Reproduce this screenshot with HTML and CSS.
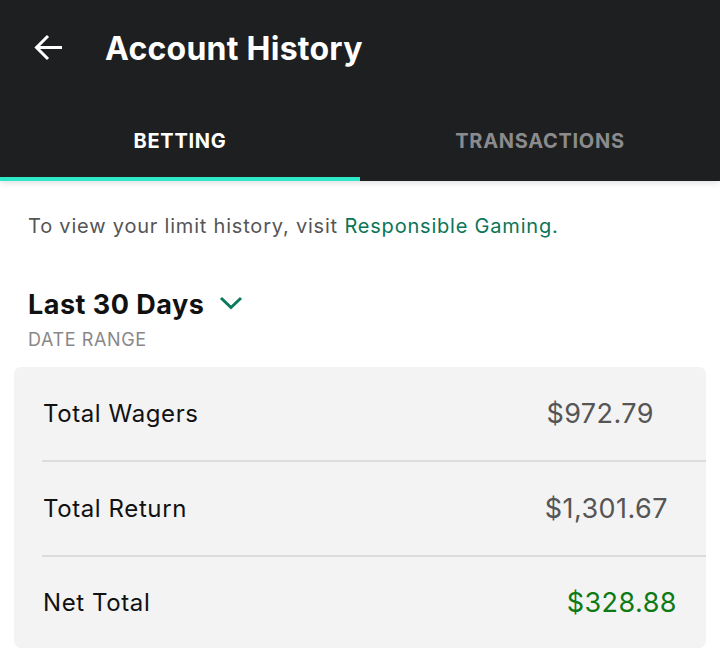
FILE: index.html
```html
<!DOCTYPE html>
<html>
<head>
<meta charset="utf-8">
<link rel="stylesheet" href="styles.css">
</head>
<body>
<header class="appbar">
  <div class="topbar">
    <svg class="back" width="30" height="30" viewBox="0 0 30 30">
      <path d="M28 14.5H3.5M14 3L2.5 14.5L14 26" fill="none" stroke="#fff" stroke-width="3"/>
    </svg>
    <h1 class="title">Account History</h1>
  </div>
  <nav class="tabs">
    <div class="tab active">BETTING</div>
    <div class="tab">TRANSACTIONS</div>
  </nav>
</header>
<main class="content">
  <p class="note">To view your limit history, visit <a class="link">Responsible Gaming.</a></p>
  <div class="range">
    <div class="range-title">Last 30 Days
      <svg class="chev" width="24" height="14" viewBox="0 0 24 14"><path d="M2 2L12 11.5L22 2" fill="none" stroke="#0b7a5c" stroke-width="3"/></svg>
    </div>
    <div class="range-label">DATE RANGE</div>
  </div>
  <section class="card">
    <div class="row"><span class="label">Total Wagers</span><span class="value v1">$972.79</span></div>
    <div class="row"><span class="label">Total Return</span><span class="value v2">$1,301.67</span></div>
    <div class="row"><span class="label">Net Total</span><span class="value positive">$328.88</span></div>
  </section>
</main>
</body>
</html>
```
FILE: styles.css
```css
html, body { margin: 0; padding: 0; background: #fff; }
body { font-family: Inter, "Noto Sans", sans-serif; width: 720px; height: 666px; overflow: hidden; }
.appbar { background: #1e1f21; height: 181px; display: flex; flex-direction: column; box-shadow: 0 2px 6px rgba(0,0,0,0.12); position: relative; }
.topbar { height: 97px; display: flex; align-items: center; padding-left: 34px; }
.back { display: block; margin-top: -2px; }
.title { margin: -1px 0 0 41px; color: #fff; font-size: 32px; font-weight: 700; letter-spacing: 0.25px; }
.tabs { flex: 1; display: flex; }
.tab { flex: 1; display: flex; align-items: center; justify-content: center; color: #8b8b8d; font-size: 20px; font-weight: 700; letter-spacing: 0.7px; padding-top: 8px; border-bottom: 4px solid transparent; }
.tab.active { color: #fff; border-bottom-color: #2ee8c8; }
.content { padding: 0 14px; }
.note { margin: 0; padding: 32px 14px 0; font-size: 20px; color: #555; line-height: 26px; letter-spacing: 0.8px; }
.link { color: #0a7557; }
.range { padding: 50px 14px 16px; }
.range-title { font-size: 27px; font-weight: 700; color: #111; display: flex; align-items: center; line-height: 32px; letter-spacing: 0.5px; }
.chev { margin-left: 15px; margin-top: -4px; }
.range-label { font-size: 18px; color: #888; margin-top: 8px; line-height: 22px; letter-spacing: 0.6px; }
.card { background: #f3f3f3; border-radius: 7px; padding-left: 28px; }
.row { height: 95px; display: flex; align-items: center; justify-content: space-between; border-bottom: 2px solid #dcdcdc; padding-right: 29px; box-sizing: border-box; }
.row:last-child { border-bottom: none; height: 91px; }
.label { font-size: 24px; color: #111; padding-left: 1px; letter-spacing: 0.6px; }
.value { font-size: 27px; color: #555; letter-spacing: 0.45px; }
.value.v1 { margin-right: 23px; }
.value.v2 { margin-right: 9px; }
.positive { color: #0d7a14; }
```
